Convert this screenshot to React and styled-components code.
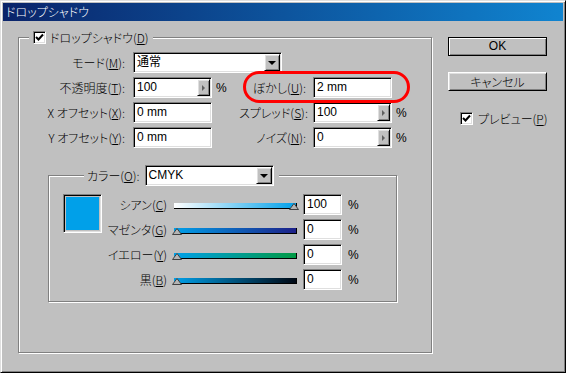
import React from 'react'
import styled, { createGlobalStyle, css } from 'styled-components'

const GlobalStyle = createGlobalStyle`
  html, body {
    margin: 0;
    padding: 0;
    background: #c0c0c0;
  }
  body {
    font-family: "Noto Sans CJK JP", "Liberation Sans", sans-serif;
    font-size: 12px;
    font-weight: 300;
    font-feature-settings: "palt";
    color: #000;
  }
  * {
    box-sizing: border-box;
  }
`

const sunken = css`
  border: 1px solid;
  border-color: #808080 #fff #fff #808080;
  box-shadow: inset 1px 1px 0 #000, inset -1px -1px 0 #dfdfdf;
`

const raised = css`
  border: 1px solid;
  border-color: #fff #000 #000 #fff;
  box-shadow: inset 1px 1px 0 #dfdfdf, inset -1px -1px 0 #808080;
`

const Window = styled.div`
  width: 566px;
  height: 373px;
  background: #c0c0c0;
  border: 1px solid;
  border-color: #dfdfdf #000 #000 #dfdfdf;
  box-shadow: inset 1px 1px 0 #fff, inset -1px -1px 0 #808080;
  padding: 2px;
  display: flex;
  flex-direction: column;
`

const TitleBar = styled.div`
  height: 18px;
  line-height: 18px;
  padding-left: 3px;
  color: #fff;
  background: linear-gradient(to right, #0a246a, #1084d0);
  white-space: nowrap;
`

const Body = styled.div`
  display: flex;
  align-items: flex-start;
  padding: 16px 0 0 15px;
`

const GroupBox = styled.div`
  border: 1px solid #808080;
  box-shadow: inset 1px 1px 0 #fff, 1px 1px 0 #fff;
  display: flex;
  flex-direction: column;
`

const MainGroup = styled(GroupBox)`
  width: 414px;
  height: 316px;
`

const ColorGroup = styled(GroupBox)`
  width: 349px;
  height: 127px;
  margin: 27px 0 0 29px;
`

const GroupHeader = styled.div`
  display: flex;
  align-items: center;
  gap: ${(p) => p.$gap}px;
  align-self: flex-start;
  background: #c0c0c0;
  margin: ${(p) => p.$top}px 0 0 ${(p) => p.$left}px;
  padding: ${(p) => p.$pad};
  line-height: 13px;
  white-space: nowrap;
`

const CheckBox = styled.span`
  ${sunken};
  width: 13px;
  height: 13px;
  background: #fff;
  display: inline-flex;
  align-items: center;
  justify-content: center;
  flex: none;
`

const FormGrid = styled.div`
  position: relative;
  display: grid;
  grid-template-columns: 108px 100px 68px 1fr;
  grid-auto-rows: 21px;
  column-gap: 6px;
  row-gap: 4px;
  margin-top: 8px;
  align-items: center;
`

const Label = styled.span`
  text-align: right;
  padding-right: ${(p) => p.$pr || 2}px;
  white-space: nowrap;
  line-height: 14px;
`

const FieldWrap = styled.div`
  display: flex;
  align-items: center;
  gap: 4px;
  grid-column: ${(p) => p.$span || 'auto'};
`

const Field = styled.div`
  ${sunken};
  width: ${(p) => p.$w}px;
  height: ${(p) => p.$h || 21}px;
  background: #fff;
  display: flex;
  align-items: stretch;
  padding: 1px;
  flex: none;
`

const Value = styled.span`
  flex: 1;
  padding-left: 2px;
  font-family: "Liberation Sans", "Noto Sans CJK JP", sans-serif;
  font-weight: 400;
  font-size: 12px;
  line-height: 17px;
  white-space: pre;
`

const Spin = styled.span`
  ${raised};
  width: 13px;
  background: #c0c0c0;
  display: flex;
  align-items: center;
  justify-content: center;

  &::after {
    content: '';
    border-left: 3px solid #606060;
    border-top: 3px solid transparent;
    border-bottom: 3px solid transparent;
  }
`

const DropButton = styled.span`
  ${raised};
  width: 16px;
  background: #c0c0c0;
  display: flex;
  align-items: center;
  justify-content: center;

  &::after {
    content: '';
    border-top: 4px solid #000;
    border-left: 4px solid transparent;
    border-right: 4px solid transparent;
  }
`

const Percent = styled.span`
  font-family: "Liberation Sans", sans-serif;
  font-weight: 400;
  font-size: 12px;
`

const Highlight = styled.div`
  position: absolute;
  left: 224px;
  top: 19px;
  width: 167px;
  height: 32px;
  border: 3px solid #ff0000;
  border-radius: 16px;
  pointer-events: none;
`

const ColorBody = styled.div`
  display: flex;
  align-items: flex-start;
  margin-top: 8px;
`

const Swatch = styled.div`
  ${sunken};
  width: 39px;
  height: 39px;
  margin-left: 14px;
  padding: 2px;

  &::after {
    content: '';
    display: block;
    width: 100%;
    height: 100%;
    background: #00a0e9;
  }
`

const SliderGrid = styled.div`
  display: grid;
  grid-template-columns: 66px 123px 39px auto;
  grid-auto-rows: 21px;
  column-gap: 6px;
  row-gap: 4px;
  align-items: center;
`

const Track = styled.div`
  position: relative;
  height: 6px;
  margin-top: 3px;
  background: ${(p) => p.$gradient};
  border-bottom: 1px solid #000;
  border-right: 1px solid #000;
`

const Thumb = styled.svg`
  position: absolute;
  bottom: -2px;
  ${(p) => (p.$atEnd ? 'right: -3px;' : 'left: -2px;')}
`

const Side = styled.div`
  display: flex;
  flex-direction: column;
  align-items: flex-start;
  margin-left: 16px;
`

const Button = styled.button`
  ${raised};
  width: 99px;
  height: 19px;
  padding: 0;
  background: #c0c0c0;
  font-family: ${(p) => (p.$latin ? '"Liberation Sans", sans-serif' : '"Noto Sans CJK JP", sans-serif')};
  font-size: 12px;
  font-weight: ${(p) => (p.$latin ? 400 : 300)};
  font-feature-settings: "palt";
  line-height: 15px;
  color: #000;
  margin-top: ${(p) => p.$mt || 0}px;
  ${(p) => p.$default && css`
    border-color: #000;
    box-shadow: inset 1px 1px 0 #fff, inset -1px -1px 0 #808080;
  `}
`

const PreviewRow = styled.div`
  display: flex;
  align-items: center;
  gap: 5px;
  margin: 21px 0 0 12px;
  line-height: 13px;
`

const Check = () => (
  <svg width="9" height="9" viewBox="0 0 9 9">
    <path d="M1 4 L3.5 6.5 L8 1.5" stroke="#000" strokeWidth="2" fill="none" />
  </svg>
)

const ThumbIcon = ({ atEnd }) => (
  <Thumb $atEnd={atEnd} width="10" height="7" viewBox="0 0 10 7">
    <polygon points="0.5,6.5 5,0.5 9.5,6.5" fill="#b4b4b4" stroke="#404040" strokeWidth="1" />
  </Thumb>
)

const Mn = ({ label, k, tail = ':' }) => (
  <>
    {label}(<u>{k}</u>){tail}
  </>
)

const sliders = [
  { label: 'シアン', k: 'C', value: '100', gradient: 'linear-gradient(to right, #ffffff, #00a0e9)', end: true },
  { label: 'マゼンタ', k: 'G', value: '0', gradient: 'linear-gradient(to right, #00a0e9, #1d2088)' },
  { label: 'イエロー', k: 'Y', value: '0', gradient: 'linear-gradient(to right, #00a0e9, #009944)' },
  { label: '黒', k: 'B', value: '0', gradient: 'linear-gradient(to right, #00a0e9, #000814)' },
]

const App = () => {
  return (
    <Window>
      <GlobalStyle />
      <TitleBar>ドロップシャドウ</TitleBar>
      <Body>
        <MainGroup>
          <GroupHeader $top={-7} $left={10} $gap={4} $pad="0 4px">
            <CheckBox><Check /></CheckBox>
            <span><Mn label="ドロップシャドウ" k="D" tail="" /></span>
          </GroupHeader>

          <FormGrid>
            <Label><Mn label="モード" k="M" /></Label>
            <FieldWrap $span="2 / span 3">
              <Field $w={149}>
                <Value>通常</Value>
                <DropButton />
              </Field>
            </FieldWrap>

            <Label><Mn label="不透明度" k="T" /></Label>
            <FieldWrap>
              <Field $w={79}>
                <Value>100</Value>
                <Spin />
              </Field>
              <Percent>%</Percent>
            </FieldWrap>
            <Label $pr={1}><Mn label="ぼかし" k="U" /></Label>
            <FieldWrap>
              <Field $w={79}>
                <Value>2 mm</Value>
              </Field>
            </FieldWrap>

            <Label><Mn label="X オフセット" k="X" /></Label>
            <FieldWrap>
              <Field $w={79}>
                <Value>0 mm</Value>
              </Field>
            </FieldWrap>
            <Label $pr={1}><Mn label="スプレッド" k="S" /></Label>
            <FieldWrap>
              <Field $w={79}>
                <Value>100</Value>
                <Spin />
              </Field>
              <Percent>%</Percent>
            </FieldWrap>

            <Label><Mn label="Y オフセット" k="Y" /></Label>
            <FieldWrap>
              <Field $w={79}>
                <Value>0 mm</Value>
              </Field>
            </FieldWrap>
            <Label $pr={1}><Mn label="ノイズ" k="N" /></Label>
            <FieldWrap>
              <Field $w={79}>
                <Value>0</Value>
                <Spin />
              </Field>
              <Percent>%</Percent>
            </FieldWrap>

            <Highlight />
          </FormGrid>

          <ColorGroup>
            <GroupHeader $top={-11} $left={35} $gap={5} $pad="0 5px 0 3px">
              <span><Mn label="カラー" k="O" /></span>
              <Field $w={129}>
                <Value>CMYK</Value>
                <DropButton />
              </Field>
            </GroupHeader>

            <ColorBody>
              <Swatch />
              <SliderGrid>
                {sliders.map((s) => (
                  <React.Fragment key={s.k}>
                    <Label $pr={1}><Mn label={s.label} k={s.k} tail="" /></Label>
                    <Track $gradient={s.gradient}>
                      <ThumbIcon atEnd={s.end} />
                    </Track>
                    <Field $w={39}>
                      <Value>{s.value}</Value>
                    </Field>
                    <Percent>%</Percent>
                  </React.Fragment>
                ))}
              </SliderGrid>
            </ColorBody>
          </ColorGroup>
        </MainGroup>

        <Side>
          <Button $latin $default>OK</Button>
          <Button $mt={16}>キャンセル</Button>
          <PreviewRow>
            <CheckBox><Check /></CheckBox>
            <span><Mn label="プレビュー" k="P" tail="" /></span>
          </PreviewRow>
        </Side>
      </Body>
    </Window>
  )
}

export default App
